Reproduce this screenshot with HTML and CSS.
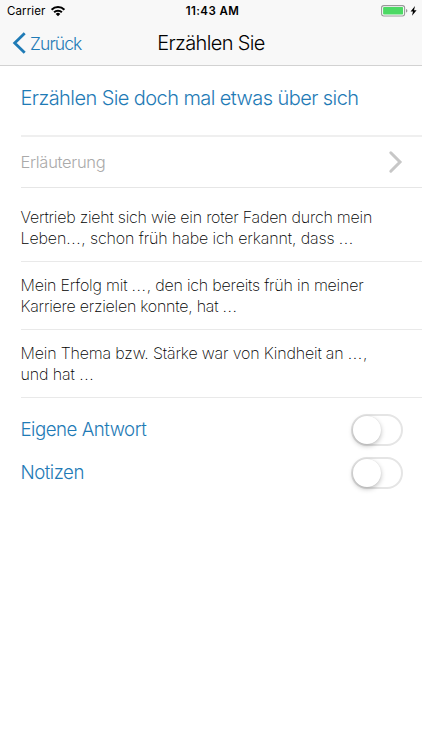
FILE: index.html
```html
<!DOCTYPE html>
<html lang="de">
<head>
<meta charset="utf-8">
<title>Erzählen Sie</title>
<link rel="stylesheet" href="styles.css">
</head>
<body>
<header class="top">
  <div class="status">
    <div class="carrier"><span>Carrier</span>
      <svg width="16" height="12" viewBox="0 0 16 12"><g fill="none" stroke="#000" stroke-width="2"><path d="M1.6 4.7A9 9 0 0 1 14.4 4.7"/><path d="M4.1 7.3A5.5 5.5 0 0 1 11.9 7.3"/></g><path d="M5.7 8.9A3.3 3.3 0 0 1 10.3 8.9L8 11.2Z"/></svg>
    </div>
    <time class="clock">11:43 AM</time>
    <div class="power">
      <svg width="37" height="12" viewBox="0 0 37 12"><rect x=".6" y=".6" width="23" height="10.4" rx="2.2" fill="#fff" stroke="#999" stroke-width="1.1"/><rect x="2.1" y="2.1" width="20" height="7.4" rx=".8" fill="#4cd964"/><path d="M25 4q1.4.2 1.4 1.8T25 7.6Z" fill="#999"/><path d="M34 1L29.6 6.4H32L31 10.8L35.6 5.3H33Z"/></svg>
    </div>
  </div>
  <nav class="nav">
    <a class="back"><svg width="14" height="22" viewBox="0 0 14 22"><path d="M12.7 1.2L2.7 11L12.7 20.8" fill="none" stroke="#1f7bb6" stroke-width="2.8"/></svg><span>Zurück</span></a>
    <h1>Erzählen Sie</h1>
  </nav>
</header>
<main>
  <h2>Erzählen Sie doch mal etwas über sich</h2>
  <div class="explain"><span>Erläuterung</span>
    <svg width="15" height="24" viewBox="0 0 15 24"><path d="M2.8 2.8L12 12L2.8 21.2" fill="none" stroke="#c7c7c7" stroke-width="3" stroke-linecap="round"/></svg>
  </div>
  <p><span class="l1">Vertrieb zieht sich wie ein roter Faden durch mein</span><br><span class="l2">Leben<b>...</b>, schon früh habe ich erkannt, dass <b>...</b></span></p>
  <p><span class="l3">Mein Erfolg mit <b>...</b>, den ich bereits früh in meiner</span><br><span class="l4">Karriere erzielen konnte, hat <b>...</b></span></p>
  <p><span class="l5">Mein Thema bzw. Stärke war von Kindheit an <b>...</b>,</span><br><span class="l6">und hat <b>...</b></span></p>
  <section class="options">
    <div class="option"><span class="own">Eigene Antwort</span><i class="switch"></i></div>
    <div class="option"><span class="notes">Notizen</span><i class="switch"></i></div>
  </section>
</main>
</body>
</html>
```
FILE: styles.css
```css
* { box-sizing: border-box; }
body { margin: 0; background: #fff; color: #222; font-family: Inter, "Liberation Sans", sans-serif; font-weight: 300; overflow: hidden; white-space: nowrap; }
svg { display: block; }
.top { height: 66px; background: #f8f8f8; border-bottom: 1px solid #d2d2d2; }
.status { height: 22px; display: grid; grid-template-columns: 1fr auto 1fr; align-items: center; padding: 0 4px 0 7px; color: #000; }
.carrier { display: flex; align-items: center; gap: 5px; font-size: 11.5px; font-weight: 400; letter-spacing: .1px; }
.clock { font-size: 11.5px; font-weight: 600; letter-spacing: .4px; }
.power { justify-self: end; }
.nav { height: 41px; display: grid; grid-template-columns: 1fr auto 1fr; align-items: center; padding: 0 12px; }
.back { display: flex; align-items: center; gap: 4px; color: #1f7bb6; font-size: 17.5px; letter-spacing: -.9px; }
.back span { padding-top: 1px; }
h1 { margin: 0; font-size: 20px; font-weight: 300; letter-spacing: -.65px; color: #000; }
main { padding-left: 20.5px; }
h2 { margin: 0; height: 71px; padding-top: 19px; font-size: 20px; line-height: 26px; font-weight: 300; letter-spacing: -.58px; color: #1f7bb6; border-bottom: 2px solid #efefef; }
.explain { height: 51px; display: flex; align-items: center; justify-content: space-between; padding-right: 19px; border-bottom: 1px solid #e6e6e6; color: #aaa; font-size: 16.5px; letter-spacing: -.3px; }
p { margin: 0; height: 68px; padding-top: 13px; font-size: 16px; line-height: 20.5px; font-weight: 200; color: #000; border-bottom: 1px solid #e9e9e9; }
.explain + p { height: 74px; padding-top: 19px; }
b { font-weight: inherit; letter-spacing: .6px; }
.l1 { letter-spacing: -.23px; }
.l2 { letter-spacing: -.12px; }
.l3 { letter-spacing: -.2px; }
.l4 { letter-spacing: -.24px; }
.l5 { letter-spacing: -.17px; }
.l6 { letter-spacing: -.1px; }
.options { padding: 10px 19px 0 0; }
.option { height: 43.3px; display: flex; align-items: center; justify-content: space-between; color: #1f7bb6; font-size: 18.7px; letter-spacing: -.5px; }
.switch { width: 52px; height: 32px; padding: 1px; border: 2px solid #e5e5e5; border-radius: 16px; }
.switch::before { content: ""; display: block; width: 28px; height: 28px; margin: -1px 0 0 -1px; border-radius: 50%; background: #fff; box-shadow: 0 2px 5px rgba(0,0,0,.25), 0 0 1px rgba(0,0,0,.12); }
```
